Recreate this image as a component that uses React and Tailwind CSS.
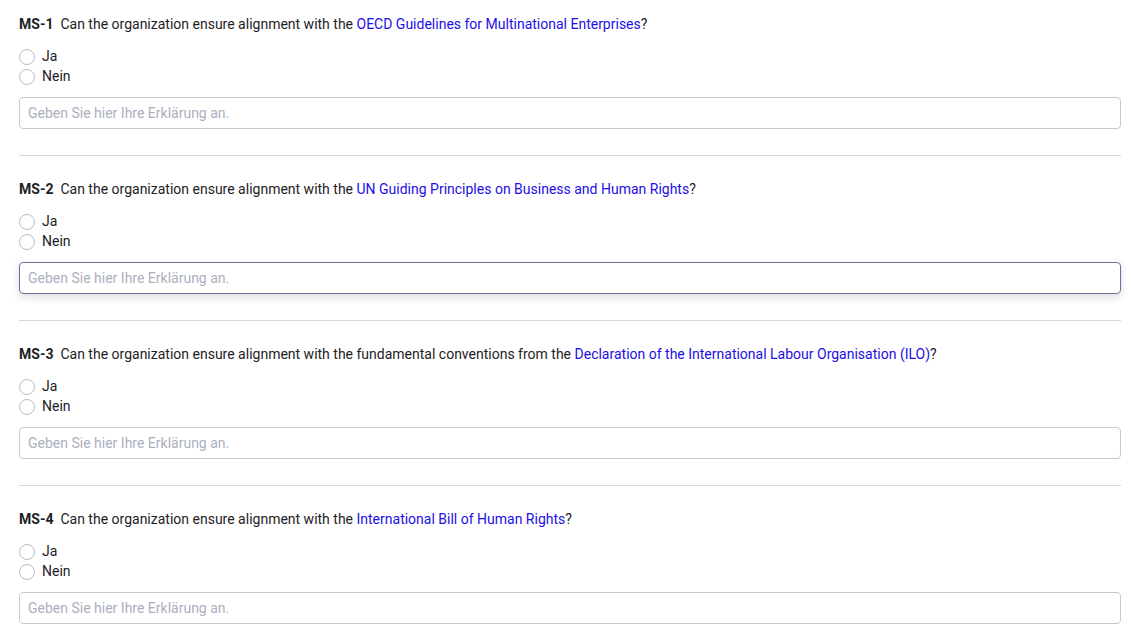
import React from 'react';

const questions = [
  { id: 'MS-1', pre: 'Can the organization ensure alignment with the ', link: 'OECD Guidelines for Multinational Enterprises', post: '?' },
  { id: 'MS-2', pre: 'Can the organization ensure alignment with the ', link: 'UN Guiding Principles on Business and Human Rights', post: '?', focused: true },
  { id: 'MS-3', pre: 'Can the organization ensure alignment with the fundamental conventions from the ', link: 'Declaration of the International Labour Organisation (ILO)', post: '?' },
  { id: 'MS-4', pre: 'Can the organization ensure alignment with the ', link: 'International Bill of Human Rights', post: '?' },
];

const Radio = ({ label }) => (
  <label className="flex items-center h-5 gap-[7px] cursor-pointer">
    <span className="w-4 h-4 rounded-full border border-[#b9bcc6] bg-white mt-[1px]" />
    <span>{label}</span>
  </label>
);

const Question = ({ q, last }) => (
  <div className={last ? '' : 'border-b border-[#d7d5de] pb-[26px] mb-[23px]'}>
    <p className="leading-5">
      <span className="font-bold">{q.id}</span>
      <span className="ml-[7px]">{q.pre}</span>
      <a href="#" className="text-[#1d0fe6]">{q.link}</a>
      {q.post}
    </p>
    <div className="mt-3 flex flex-col">
      <Radio label="Ja" />
      <Radio label="Nein" />
    </div>
    <input
      type="text"
      placeholder="Geben Sie hier Ihre Erklärung an."
      className={
        'mt-[11px] w-full h-8 px-2 rounded text-sm outline-none placeholder:text-[#abafbe] border ' +
        (q.focused
          ? 'border-[#6b7399] shadow-[0_3px_8px_rgba(60,60,100,0.18)]'
          : 'border-[#c5c9d2]')
      }
    />
  </div>
);

export default function App() {
  return (
    <div className="bg-white min-h-screen pl-[19px] pr-[11px] pt-[14px] text-sm text-[#1e2125] font-['Roboto',sans-serif]">
      {questions.map((q, i) => (
        <Question key={q.id} q={q} last={i === questions.length - 1} />
      ))}
    </div>
  );
}
